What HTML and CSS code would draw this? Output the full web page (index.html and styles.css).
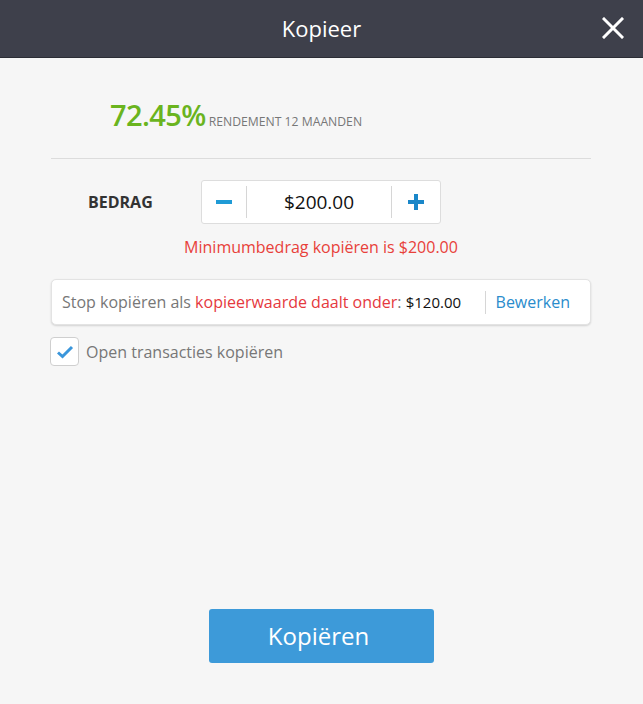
FILE: index.html
```html
<!DOCTYPE html>
<html lang="nl">
<head>
<meta charset="utf-8">
<title>Kopieer</title>
<link rel="stylesheet" href="styles.css">
</head>
<body>
<div class="dialog">
  <header class="header">
    <span></span>
    <h1 class="title">Kopieer</h1>
    <button class="close" aria-label="Sluiten">
      <svg width="22" height="22" viewBox="0 0 22 22"><path d="M2 2 L20 20 M20 2 L2 20" stroke="#fff" stroke-width="3" stroke-linecap="square" fill="none"/></svg>
    </button>
  </header>
  <main class="content">
    <div class="perf">
      <span class="perf-value">72.45%</span><span class="perf-label">RENDEMENT 12 MAANDEN</span>
    </div>
    <div class="amount-row">
      <span class="amount-label">BEDRAG</span>
      <div class="stepper">
        <button class="step minus" aria-label="min"><span class="bar"></span></button>
        <span class="sep"></span>
        <span class="value">$200.00</span>
        <span class="sep"></span>
        <button class="step plus" aria-label="plus"><span class="bar"></span><span class="bar vert"></span></button>
      </div>
    </div>
    <p class="error">Minimumbedrag kopiëren is $200.00</p>
    <div class="stop-box">
      <span class="stop-text">Stop kopiëren als <span class="red">kopieerwaarde daalt onder</span>: <span class="stop-amount">$120.00</span></span>
      <span class="sep tall"></span>
      <a class="edit" href="#">Bewerken</a>
    </div>
    <label class="check-row">
      <span class="checkbox">
        <svg width="18" height="14" viewBox="0 0 18 14"><path d="M2 7.5 L6.5 11.5 L16 2" stroke="#3a96db" stroke-width="3" fill="none"/></svg>
      </span>
      <span class="check-label">Open transacties kopiëren</span>
    </label>
  </main>
  <footer class="footer">
    <button class="primary">Kopiëren</button>
  </footer>
</div>
</body>
</html>
```
FILE: styles.css
```css
* { box-sizing: border-box; }
html, body { margin: 0; padding: 0; }
body {
  background: #f6f6f6;
  font-family: "Open Sans", "Noto Sans", sans-serif;
  color: #777;
}
.dialog {
  height: 704px;
  display: flex;
  flex-direction: column;
}
.header {
  height: 58px;
  background: #3e404b;
  border-bottom: 1px solid #2b2d35;
  display: grid;
  grid-template-columns: 1fr auto 1fr;
  align-items: center;
}
.title {
  margin: 0;
  font-size: 22px;
  font-weight: 400;
  color: #fff;
  line-height: 30px;
  padding-bottom: 2px;
}
.close {
  justify-self: end;
  margin-right: 19px;
  background: none;
  border: 0;
  padding: 0;
  width: 22px;
  height: 22px;
  display: flex;
  margin-bottom: 1px;
}
.content {
  flex: 1;
  padding: 0 52px 0 51px;
  display: flex;
  flex-direction: column;
}
.perf {
  padding: 37px 0 0 59px;
  height: 101px;
  border-bottom: 1px solid #dcdcdc;
  line-height: 40px;
  white-space: nowrap;
}
.perf-value {
  font-size: 29px;
  font-weight: 600;
  color: #6ab41e;
  letter-spacing: -0.6px;
}
.perf-label {
  font-size: 12.2px;
  color: #777;
  margin-left: 3px;
}
.amount-row {
  margin-top: 21px;
  display: flex;
  align-items: center;
  padding-left: 37px;
}
.amount-label {
  width: 113px;
  font-size: 16px;
  font-weight: 700;
  color: #333;
}
.stepper {
  width: 240px;
  height: 44px;
  background: #fff;
  border: 1px solid #ddd;
  border-radius: 3px;
  display: flex;
  align-items: center;
}
.step {
  background: none;
  border: 0;
  padding: 0;
  height: 100%;
  position: relative;
  display: flex;
  align-items: center;
  justify-content: center;
}
.minus { width: 44px; }
.plus { width: 48px; }
.bar {
  display: block;
  width: 16px;
  height: 4px;
  background: #1f9bd6;
}
.plus .bar { background: #1a87c9; }
.plus .bar.vert {
  position: absolute;
  width: 4px;
  height: 16px;
}
.sep {
  width: 1px;
  height: 32px;
  background: #d6d6d6;
}
.value {
  flex: 1;
  text-align: center;
  font-size: 19px;
  color: #111;
}
.error {
  margin: 13px 0 0;
  text-align: center;
  font-size: 16px;
  line-height: 20px;
  color: #e8413a;
}
.stop-box {
  margin-top: 22px;
  height: 46px;
  background: #fff;
  border: 1px solid #e3e3e3;
  border-radius: 5px;
  box-shadow: 0 1px 2px rgba(0,0,0,0.15);
  display: flex;
  align-items: center;
  padding: 0 20px 0 10px;
  white-space: nowrap;
}
.stop-text {
  font-size: 16px;
  color: #777;
  flex: 1;
}
.red { color: #e5393e; }
.stop-amount {
  color: #111;
  font-size: 15px;
}
.sep.tall { height: 23px; margin-right: 10px; }
.edit {
  font-size: 16px;
  color: #2a8ccc;
  text-decoration: none;
}
.check-row {
  margin-top: 12px;
  display: flex;
  align-items: center;
}
.checkbox {
  width: 29px;
  height: 29px;
  background: #fff;
  border: 1px solid #cfcfcf;
  border-radius: 4px;
  margin-left: -1px;
  display: flex;
  align-items: center;
  justify-content: center;
}
.check-label {
  margin-left: 7px;
  font-size: 16px;
  color: #777;
}
.footer {
  display: flex;
  justify-content: center;
  padding-bottom: 41px;
}
.primary {
  width: 225px;
  height: 54px;
  margin-left: -1px;
  background: #3d9ad9;
  border: 0;
  border-radius: 3px;
  color: #fff;
  font-family: "Open Sans", "Noto Sans", sans-serif;
  font-size: 24px;
  padding: 0 5px 2px 0;
}
```
